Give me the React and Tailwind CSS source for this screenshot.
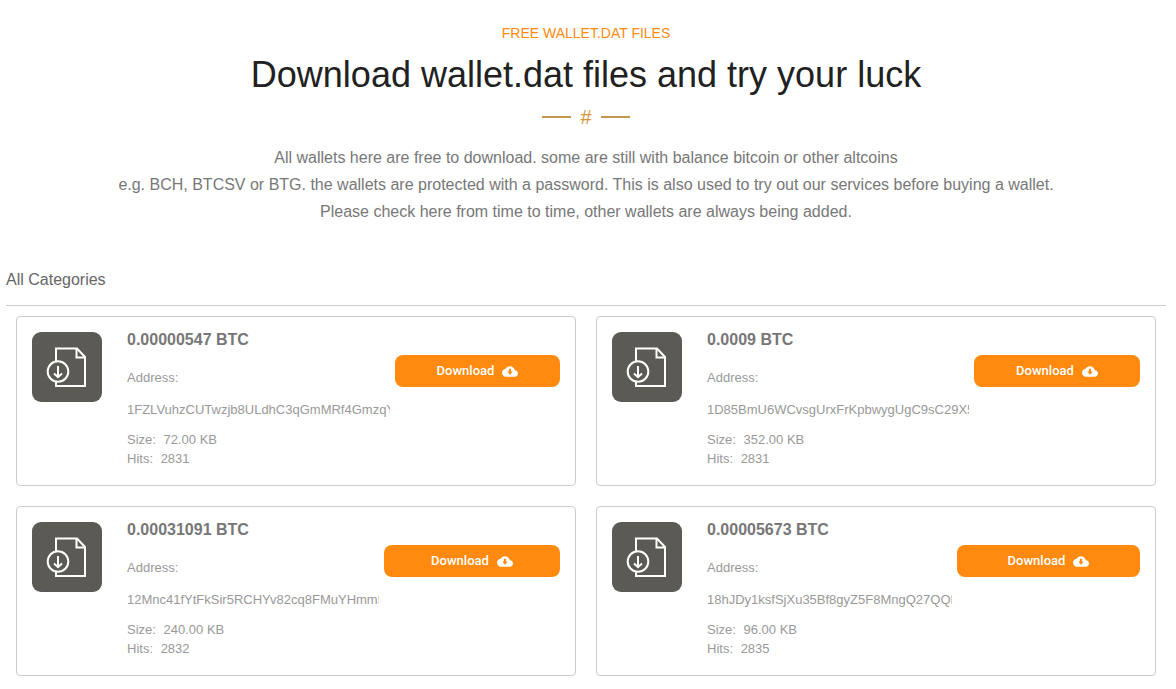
import React from 'react'

const wallets = [
  { id: 1, title: '0.00000547 BTC', address: '1FZLVuhzCUTwzjb8ULdhC3qGmMRf4GmzqY', size: '72.00 KB', hits: 2831, buttonWidth: 'w-[165px]' },
  { id: 2, title: '0.0009 BTC', address: '1D85BmU6WCvsgUrxFrKpbwygUgC9sC29X5', size: '352.00 KB', hits: 2831, buttonWidth: 'w-[166px]' },
  { id: 3, title: '0.00031091 BTC', address: '12Mnc41fYtFkSir5RCHYv82cq8FMuYHmm5', size: '240.00 KB', hits: 2832, buttonWidth: 'w-[176px]' },
  { id: 4, title: '0.00005673 BTC', address: '18hJDy1ksfSjXu35Bf8gyZ5F8MngQ27QQK', size: '96.00 KB', hits: 2835, buttonWidth: 'w-[183px]' },
]

const FileIcon = () => (
  <svg className="size-[70px] shrink-0" viewBox="0 0 70 70" fill="none" aria-hidden="true">
    <rect width="70" height="70" rx="9" fill="#5b5a55" />
    <g stroke="#fff" strokeWidth="2">
      <path d="M24 30V16.500H45L53 25V54H24V49" />
      <path d="M44.500 17V25.500H53" />
      <circle cx="26" cy="39.500" r="10.300" />
      <path d="M26 34V44.500M22 41.500L26 45.200L30 41.500" />
    </g>
  </svg>
)

const CloudIcon = () => (
  <svg className="h-[11px] w-4" viewBox="0 4 24 16" fill="currentColor" aria-hidden="true">
    <path
      fillRule="evenodd"
      d="M19.350 10.040C18.670 6.590 15.640 4 12 4 9.110 4 6.600 5.640 5.350 8.040 2.340 8.360 0 10.910 0 14c0 3.310 2.690 6 6 6h13c2.760 0 5-2.240 5-5 0-2.640-2.050-4.780-4.650-4.960zM10.500 8h3v4h2.700L12 17l-4.200-5h2.700z"
    />
  </svg>
)

const Header = () => (
  <header className="flex flex-col items-center text-center">
    <p className="text-sm leading-5 text-[#ff8a0f]">FREE WALLET.DAT FILES</p>
    <h1 className="mt-3 text-4xl leading-10 text-[#212121]">Download wallet.dat files and try your luck</h1>
    <div className="mt-3 flex items-center gap-[9px] text-[#d0953a]">
      <span className="h-0.5 w-[29px] bg-[#c2964c]"></span>
      <span className="text-xl leading-5">#</span>
      <span className="h-0.5 w-[29px] bg-[#c2964c]"></span>
    </div>
    <p className="mt-[17px] leading-[27px] text-[#777]">
      All wallets here are free to download. some are still with balance bitcoin or other altcoins
      <br />
      e.g. BCH, BTCSV or BTG. the wallets are protected with a password. This is also used to try out our services before buying a wallet.
      <br />
      Please check here from time to time, other wallets are always being added.
    </p>
  </header>
)

const WalletCard = ({ wallet }) => (
  <article className="flex rounded border border-[#ccc] px-[15px] pt-[13px] pb-[17px]">
    <div className="pt-0.5">
      <FileIcon />
    </div>
    <div className="ml-[25px] min-w-0 flex-1 text-[13px] leading-[19px] text-[#999]">
      <h3 className="text-base leading-5 font-bold whitespace-nowrap text-[#777]">{wallet.title}</h3>
      <p className="mt-[18px] leading-5">Address:</p>
      <p className="mt-3 overflow-hidden leading-5 whitespace-nowrap">{wallet.address}</p>
      <p className="mt-2.5">Size: <span className="ml-1">{wallet.size}</span></p>
      <p>Hits: <span className="ml-1">{wallet.hits}</span></p>
    </div>
    <button
      type="button"
      className={`mt-[25px] ml-[5px] flex h-8 shrink-0 cursor-pointer items-center justify-center gap-2 rounded-lg bg-[#ff8a0f] font-[Roboto,sans-serif] text-[13px] font-medium text-white ${wallet.buttonWidth}`}
    >
      Download
      <CloudIcon />
    </button>
  </article>
)

const App = () => {
  return (
    <main className="min-h-screen bg-white pt-[23px] pr-2.5 pb-3 pl-1.5 font-['Liberation_Sans',Arial,sans-serif] text-base">
      <Header />
      <section className="mt-[45px]">
        <h2 className="border-b border-[#ccc] pb-[15px] leading-5 text-[#666]">All Categories</h2>
        <div className="grid grid-cols-1 gap-5 px-2.5 pt-2.5 md:grid-cols-2">
          {wallets.map((wallet) => (
            <WalletCard key={wallet.id} wallet={wallet} />
          ))}
        </div>
      </section>
    </main>
  )
}

export default App
